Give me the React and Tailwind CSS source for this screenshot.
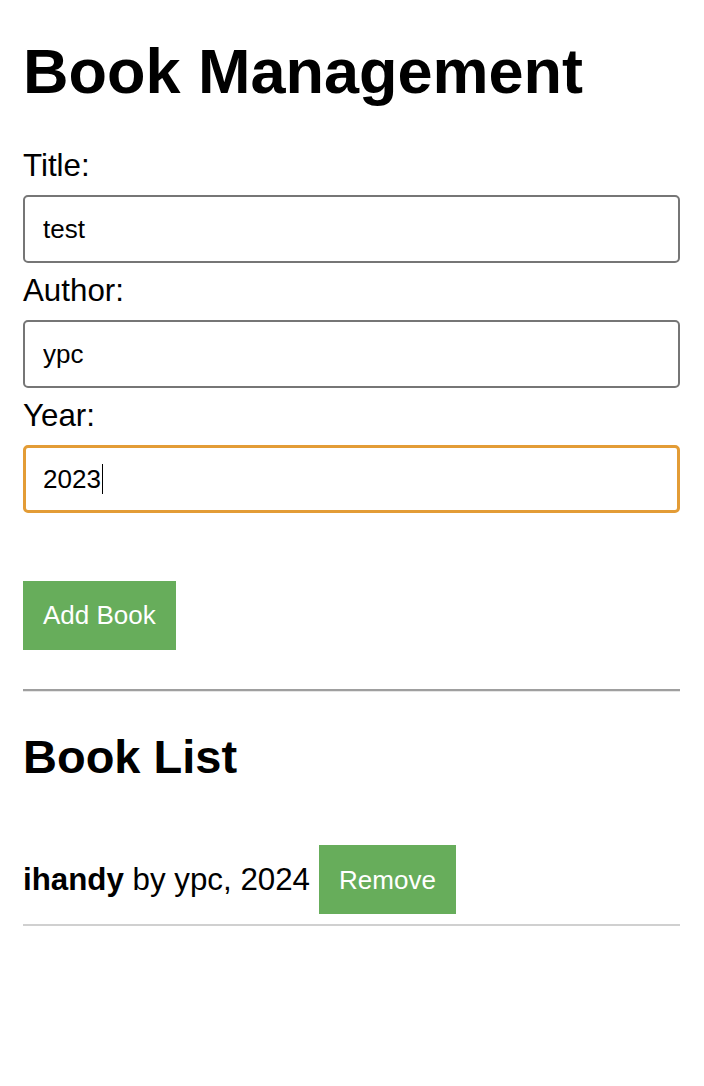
import React from 'react';

const font = { fontFamily: '"Liberation Sans", Arial, sans-serif' };

const Field = ({ label, value, focused }) => (
  <div className="flex flex-col">
    <label className="text-[31.3px] leading-[36px] text-black">{label}</label>
    {focused ? (
      <div className="mt-[11px] mb-[10px] h-[68px] flex items-center rounded-[5px] border-[3px] border-[#e39c36] pl-[17px] text-[26px] text-black">
        <span>{value}</span>
        <span className="ml-px h-[30px] w-px bg-black" />
      </div>
    ) : (
      <input
        readOnly
        value={value}
        className="mt-[11px] mb-[10px] h-[68px] w-full rounded-[5px] border-2 border-[#767676] pl-[18px] text-[26px] text-black outline-none"
        style={font}
      />
    )}
  </div>
);

export default function App() {
  const books = [{ id: 1, title: 'ihandy', author: 'ypc', year: 2024 }];

  return (
    <div className="min-h-[1086px] bg-white pl-[23px] pr-6 pt-[35px] text-black" style={font}>
      <h1 className="text-[63px] leading-[72px] font-bold">Book Management</h1>

      <form className="mt-[41px]" onSubmit={(e) => e.preventDefault()}>
        <Field label="Title:" value="test" />
        <Field label="Author:" value="ypc" />
        <Field label="Year:" value="2023" focused />
        <button
          type="submit"
          className="mt-[58px] h-[69px] bg-[#67ad5b] px-5 text-[26px] text-white"
          style={font}
        >
          Add Book
        </button>
      </form>

      <div className="mt-[39px] h-[3px] border-t-2 border-b border-t-[#9f9f9f] border-b-[#e6e6e6]" />

      <h2 className="mt-[38px] text-[47px] leading-[53px] font-bold">Book List</h2>

      <ul className="mt-[52px]">
        {books.map((b) => (
          <li key={b.id} className="flex items-center border-b-2 border-[#d0d0d0] pt-[10px] pb-[10px] text-[31.3px] leading-[36px]">
            <span>
              <strong className="font-bold">{b.title}</strong> by {b.author}, {b.year}
            </span>
            <button
              className="ml-[9px] h-[69px] bg-[#67ad5b] px-5 text-[26px] text-white"
              style={font}
            >
              Remove
            </button>
          </li>
        ))}
      </ul>
    </div>
  );
}
